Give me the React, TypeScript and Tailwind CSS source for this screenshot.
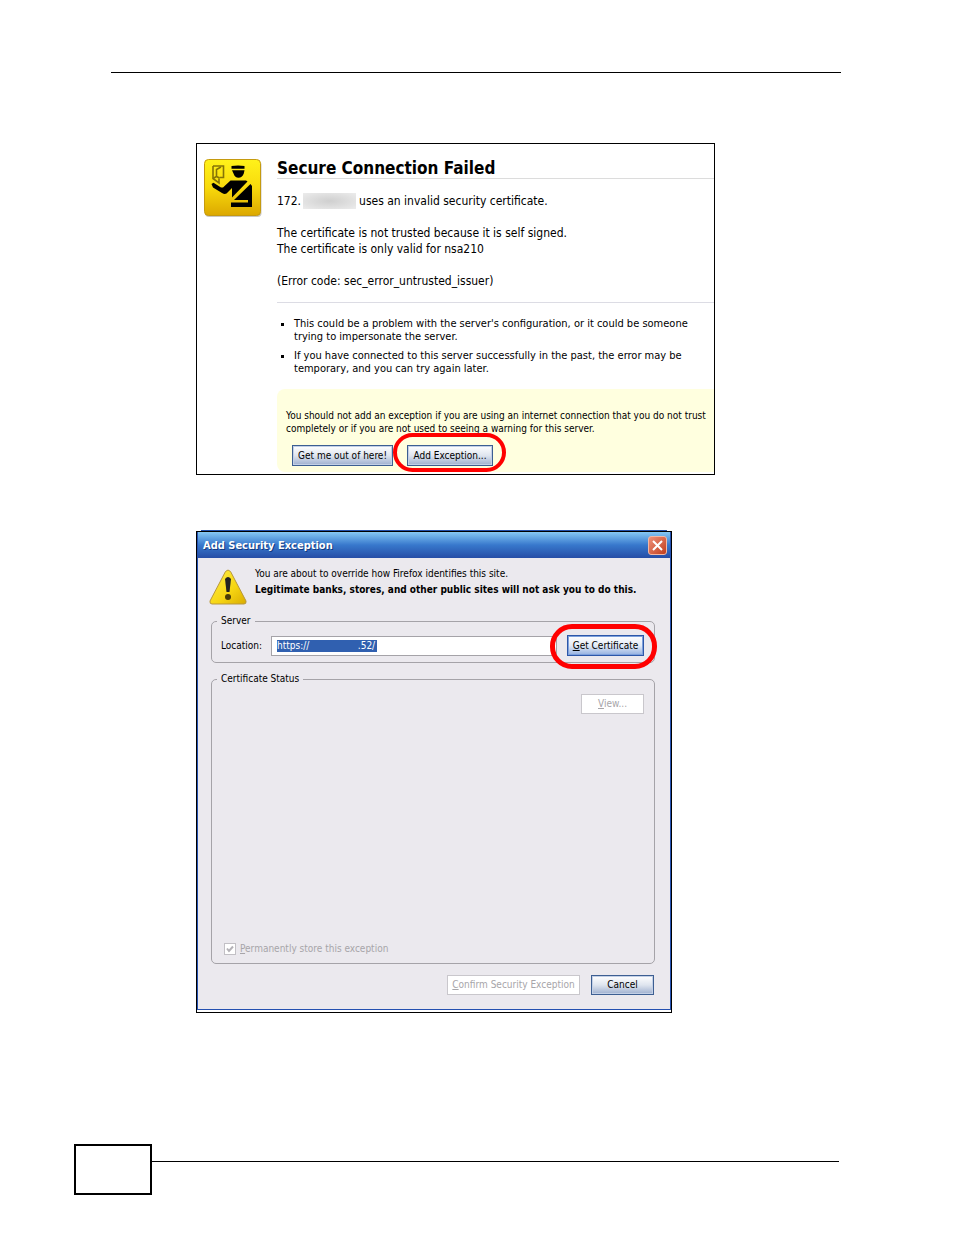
import React from "react";

const buttonBase =
  "block border bg-linear-to-b text-[10px] leading-4 whitespace-nowrap";

const xpButton =
  "border-[#3d5f92] from-[#ffffff] via-[#dfe5ef] to-[#9fb0cf] text-black shadow-[inset_0_0_0_1px_#c3d0e6]";

const disabledButton = "border-[#c9c7cc] from-white to-white text-[#a7a5a9]";

const OfficerIcon = () => (
  <svg viewBox="0 0 58 60" className="mt-px h-[60px] w-[58px] shrink-0" aria-hidden="true">
    <defs>
      <linearGradient id="badge" x1="0" y1="0" x2="0" y2="1">
        <stop offset="0" stopColor="#fff21a" />
        <stop offset="0.5" stopColor="#f8da0c" />
        <stop offset="1" stopColor="#dca800" />
      </linearGradient>
    </defs>
    <rect x="1" y="2" width="56.500" height="56" rx="4" fill="#c9c7c2" />
    <rect x="0.5" y="0.5" width="56" height="56" rx="4" fill="url(#badge)" stroke="#c59a10" />
    <g fill="none" stroke="#857407" strokeWidth="1.600">
      <path d="M9 7h10.500v11.500h-4M9 7v12.500l6 4.500v-4.500" />
      <path d="M9 19.500l3.500-2V10.500L17 8M12.500 17.500l3 1.500" />
    </g>
    <g fill="#000">
      <path d="M27.500 7q6.500-1 13 0v2.700h-13z" />
      <path d="M28 11.200h12.500l-.7 3.300q-1.800 4.300-5.300 4.300t-5-4.300z" />
      <path d="M7.500 25l2-1.200L17 28.500h2L26.500 21.500H42l1.500 1L28 38.500V29l-5.500 5.500q-2 1-4.500-.5L9 28.500z" />
      <path d="M46.500 25l1.500 2v21H27v-4.500h17V41H30z" />
    </g>
  </svg>
);

const WarningIcon = () => (
  <svg viewBox="0 0 38 36" className="h-9 w-[38px] shrink-0" aria-hidden="true">
    <defs>
      <linearGradient id="warn" x1="0" y1="0" x2="1" y2="1">
        <stop offset="0" stopColor="#fff04a" />
        <stop offset="0.6" stopColor="#f6d512" />
        <stop offset="1" stopColor="#d9ac00" />
      </linearGradient>
    </defs>
    <path
      d="M16.500 2.500q2.500-3 5 0L37 32q.5 3-2 3H3q-2.500 0-2-3z"
      fill="url(#warn)"
      stroke="#b8973c"
    />
    <path d="M16 10q3-4 6 0l-1.500 13h-3z" fill="#222" />
    <circle cx="19" cy="28" r="3" fill="#4a3c08" />
  </svg>
);

const Ring = ({ className }: { className: string }) => (
  <span
    aria-hidden="true"
    className={`pointer-events-none absolute z-10 border-[#f00] ${className}`}
  />
);

const ConnectionFailed = () => {
  return (
    <section className="flex w-full max-w-[519px] overflow-hidden border border-black bg-white pt-[14px] pb-[2px] pl-[7px]">
      <OfficerIcon />
      <div className="ml-[15px] flex min-w-0 flex-1 flex-col">
        <h1 className="border-b border-[#dcdcdc] text-[17px] leading-5 font-bold whitespace-nowrap">
          Secure Connection Failed
        </h1>
        <div className="mt-[14px] border-b border-[#dcdce4] pb-[13px] text-[12px] leading-4 whitespace-nowrap">
          <p className="flex">
            172.
            <span
              aria-hidden="true"
              className="mr-[3px] ml-[2px] h-4 w-[53px] bg-radial from-[#cfcfcf] to-[#ececec]"
            />
            uses an invalid security certificate.
          </p>
          <p className="mt-4">The certificate is not trusted because it is self signed.</p>
          <p>The certificate is only valid for nsa210</p>
          <p className="mt-4">(Error code: sec_error_untrusted_issuer)</p>
        </div>
        <ul className="mt-[14px] ml-[17px] flex list-[square] flex-col gap-[6px] text-[11px] leading-[13px] whitespace-nowrap">
          <li>
            This could be a problem with the server's configuration, or it could be someone
            <br />
            trying to impersonate the server.
          </li>
          <li>
            If you have connected to this server successfully in the past, the error may be
            <br />
            temporary, and you can try again later.
          </li>
        </ul>
        <div className="mt-[14px] rounded-l-lg bg-[#ffffdf] pt-5 pb-[6px] pl-[9px]">
          <p className="text-[10px] leading-[13px] whitespace-nowrap">
            You should not add an exception if you are using an internet connection that you do not trust
            <br />
            completely or if you are not used to seeing a warning for this server.
          </p>
          <div className="mt-[10px] ml-[6px] flex gap-[14px]">
            <button type="button" className={`${buttonBase} ${xpButton} h-[21px] w-[101px]`}>
              Get me out of here!
            </button>
            <div className="relative">
              <button type="button" className={`${buttonBase} ${xpButton} h-[21px] w-[86px]`}>
                Add Exception...
              </button>
              <Ring className="-top-3 -left-[14px] h-[39px] w-[113px] rounded-[20px] border-4" />
            </div>
          </div>
        </div>
      </div>
    </section>
  );
};

const SecurityException = () => {
  return (
    <section className="relative w-full max-w-[476px] border border-black bg-white pb-[2px]">
      <span aria-hidden="true" className="absolute -top-[2px] right-1 left-1 h-px bg-[#2450a8]" />
      <div className="border-x border-b border-[#2450b0] bg-[#ebe9ee]">
        <header className="flex h-[26px] items-center justify-between bg-linear-to-b from-[#86c8f4] via-[#3878cc] to-[#264da6] pr-[3px] pl-[5px] text-white">
          <h2 className="pt-px text-[11px] leading-4 font-bold [text-shadow:1px_1px_#123a80]">
            Add Security Exception
          </h2>
          <button
            type="button"
            aria-label="Close"
            className="flex h-[19px] w-[19px] items-center justify-center rounded-[3px] border border-[#f3b8a4] bg-linear-to-br from-[#ee9078] to-[#c03c18]"
          >
            <svg viewBox="0 0 11 11" className="h-[11px] w-[11px]" aria-hidden="true">
              <path d="M1 1l9 9M10 1l-9 9" stroke="#fff" strokeWidth="2" />
            </svg>
          </button>
        </header>
        <div className="pt-2 pr-[15px] pb-[14px] pl-[13px] text-[10px] leading-4">
          <div className="flex h-[47px] gap-2 whitespace-nowrap">
            <div className="-ml-[2px] pt-[3px]">
              <WarningIcon />
            </div>
            <div>
              <p>You are about to override how Firefox identifies this site.</p>
              <p className="font-bold">
                Legitimate banks, stores, and other public sites will not ask you to do this.
              </p>
            </div>
          </div>
          <fieldset className="rounded-[5px] border border-[#a5a3a8] pr-[10px] pb-[6px] pl-[9px]">
            <legend className="-ml-1 px-1">Server</legend>
            <div className="mt-[6px] flex items-center">
              <label htmlFor="location" className="w-[50px]">
                Location:
              </label>
              <div className="flex h-5 flex-1 items-center border border-[#a5a3a8] bg-white px-[5px]">
                <input
                  id="location"
                  type="text"
                  defaultValue={"https://" + "\u00a0".repeat(17) + ".52/"}
                  className="h-3 w-[100px] bg-[#3060b0] text-white outline-none"
                />
              </div>
              <div className="relative ml-[10px]">
                <button
                  type="button"
                  className={`${buttonBase} h-[21px] w-[77px] border-[#2d57a8] from-[#ffffff] via-[#e4ebf6] to-[#94b0e0] text-black shadow-[inset_0_0_0_1px_#7da0dc]`}
                >
                  <u>G</u>et Certificate
                </button>
                <Ring className="-top-[11px] -left-[17px] h-[45px] w-[107px] rounded-[22px] border-[5px]" />
              </div>
            </div>
          </fieldset>
          <fieldset className="mt-2 rounded-[5px] border border-[#a5a3a8] px-[10px] pb-[6px]">
            <legend className="-ml-[5px] px-1">Certificate Status</legend>
            <div className="mt-[7px] flex h-[263px] flex-col justify-between">
              <button
                type="button"
                disabled
                className={`${buttonBase} ${disabledButton} h-5 w-[63px] self-end`}
              >
                <u>V</u>iew...
              </button>
              <label className="flex items-center gap-1 text-[#a7a5a9]">
                <span className="relative ml-[2px] flex">
                  <input
                    type="checkbox"
                    defaultChecked
                    disabled
                    className="h-3 w-3 appearance-none border border-[#c2c0c5] bg-white"
                  />
                  <svg viewBox="0 0 12 12" className="absolute h-3 w-3" aria-hidden="true">
                    <path d="M3 5.500l2 2.500 4-4.500" fill="none" stroke="#b4b2b7" strokeWidth="2" />
                  </svg>
                </span>
                <span>
                  <u>P</u>ermanently store this exception
                </span>
              </label>
            </div>
          </fieldset>
          <div className="mt-[11px] flex justify-end gap-[11px] pr-[1px]">
            <button
              type="button"
              disabled
              className={`${buttonBase} ${disabledButton} h-5 w-[133px]`}
            >
              <u>C</u>onfirm Security Exception
            </button>
            <button type="button" className={`${buttonBase} ${xpButton} h-5 w-[63px]`}>
              Cancel
            </button>
          </div>
        </div>
      </div>
    </section>
  );
};

const App = () => {
  return (
    <div className="min-h-screen bg-white pt-[72px] font-['DejaVu_Sans_Condensed','DejaVu_Sans',sans-serif] text-black">
      <hr className="mr-[113px] ml-[111px] border-black" />
      <main className="mt-[70px] flex flex-col gap-14 px-[196px]">
        <ConnectionFailed />
        <SecurityException />
      </main>
      <footer className="mt-[131px] mr-[115px] ml-[74px] flex pb-10">
        <div className="h-[51px] w-[78px] border-2 border-black" />
        <hr className="mt-[17px] flex-1 border-black" />
      </footer>
    </div>
  );
};

export default App;
